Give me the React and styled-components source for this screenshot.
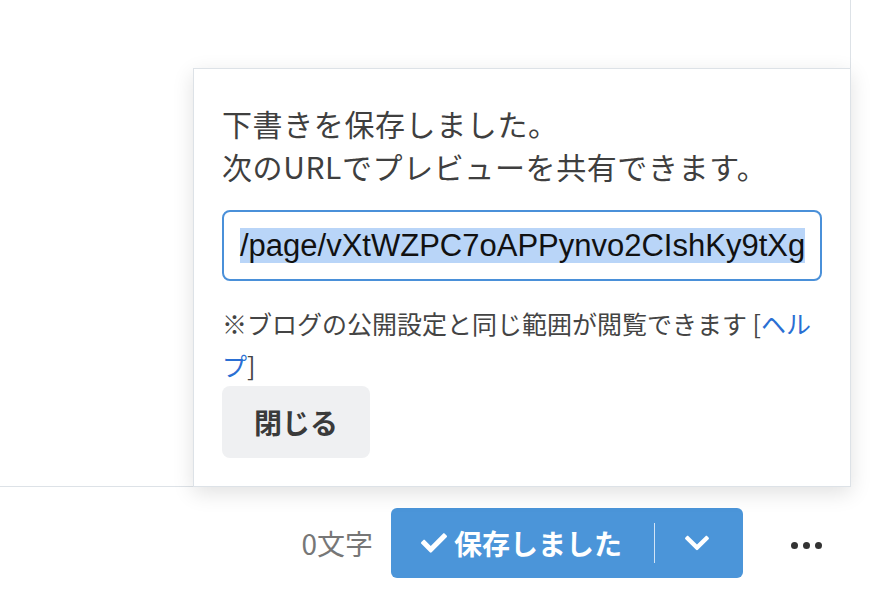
import React from 'react'
import styled, { createGlobalStyle } from 'styled-components'
import { FaCheck, FaChevronDown } from 'react-icons/fa'

const GlobalStyle = createGlobalStyle`
html, body {
  margin: 0;
  padding: 0;
  background: #fff;
}
body {
  font-family: "Noto Sans CJK JP", "Liberation Sans", sans-serif;
  color: #3f3f3f;
}
`

const Page = styled.div`
width: 880px;
height: 598px;
display: flex;
flex-direction: column;
overflow: hidden;
`

const Editor = styled.div`
position: relative;
flex-shrink: 0;
width: 850px;
height: 486px;
border-right: 1px solid #dde2e7;
border-bottom: 1px solid #dde2e7;
`

const Popover = styled.div`
position: absolute;
right: -1px;
bottom: -1px;
width: 658px;
box-sizing: border-box;
padding: 33px 28px 28px;
background: #fff;
border: 1px solid #dde2e7;
box-shadow: 0 6px 20px rgba(0, 0, 0, 0.12);
display: flex;
flex-direction: column;
align-items: flex-start;
`

const Message = styled.p`
margin: 0 0 22px;
font-size: 30px;
line-height: 43px;
letter-spacing: 0.6px;
color: #3f3f3f;
`

const UrlField = styled.div`
width: 100%;
height: 71px;
box-sizing: border-box;
border: 2px solid #4a90d9;
border-radius: 8px;
padding: 0 16px;
display: flex;
align-items: center;
overflow: hidden;
white-space: nowrap;
`

const Selected = styled.span`
font-family: "Liberation Sans", Arial, sans-serif;
font-size: 31px;
line-height: 35px;
color: #111;
background: #b9d5f8;
`

const Note = styled.p`
margin: 21px 0 0;
font-size: 25px;
line-height: 42px;
color: #444;
`

const HelpLink = styled.a`
color: #2a6fd3;
text-decoration: none;
`

const CloseButton = styled.button`
height: 72px;
padding: 0 32px;
border: none;
border-radius: 8px;
background: #eff0f2;
font-family: "Noto Sans CJK JP", sans-serif;
font-size: 28px;
font-weight: 700;
color: #3a3a3a;
cursor: pointer;
`

const Toolbar = styled.div`
flex: 1;
display: flex;
align-items: center;
justify-content: flex-end;
padding-right: 58px;
`

const Count = styled.span`
font-size: 28px;
color: #777;
margin-right: 18px;
`

const SaveButton = styled.div`
height: 70px;
display: flex;
align-items: center;
border-radius: 6px;
background: #4b95d9;
color: #fff;
`

const SaveMain = styled.div`
display: flex;
align-items: center;
gap: 7px;
padding: 0 32px 0 30px;
font-size: 28px;
font-weight: 700;
`

const Divider = styled.span`
width: 1px;
height: 40px;
background: rgba(255, 255, 255, 0.75);
`

const Toggle = styled.div`
display: flex;
align-items: center;
padding: 0 32px 0 28px;
`

const More = styled.div`
margin: 5px 0 0 48px;
display: flex;
gap: 5px;
`

const Dot = styled.span`
width: 7px;
height: 7px;
border-radius: 50%;
background: #333;
`

const App = () => {
  return (
    <Page>
      <GlobalStyle />
      <Editor>
        <Popover>
          <Message>
            下書きを保存しました。<br />
            次のURLでプレビューを共有できます。
          </Message>
          <UrlField>
            <Selected>/page/vXtWZPC7oAPPynvo2CIshKy9tXg</Selected>
          </UrlField>
          <Note>
            ※ブログの公開設定と同じ範囲が閲覧できます [<HelpLink href="#">ヘルプ</HelpLink>]
          </Note>
          <CloseButton>閉じる</CloseButton>
        </Popover>
      </Editor>
      <Toolbar>
        <Count>0文字</Count>
        <SaveButton>
          <SaveMain>
            <FaCheck size={26} />
            保存しました
          </SaveMain>
          <Divider />
          <Toggle>
            <FaChevronDown size={28} />
          </Toggle>
        </SaveButton>
        <More>
          <Dot />
          <Dot />
          <Dot />
        </More>
      </Toolbar>
    </Page>
  )
}

export default App
